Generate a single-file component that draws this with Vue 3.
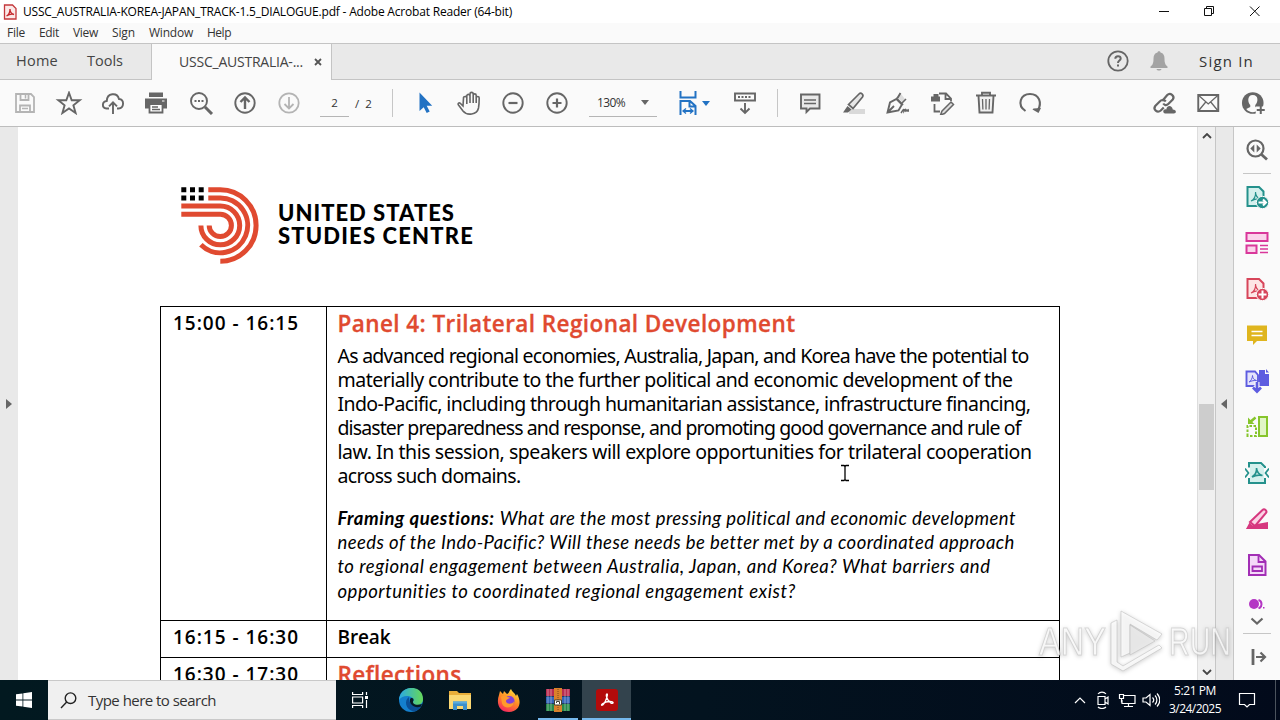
<template>
  <div class="screen">
    <header class="title-bar">
      <svg class="app-icon" viewBox="0 0 14 16">
        <path d="M1.500 1h8L13 4.500V15H1.500z" fill="#fbe9e8" stroke="#c4373b" stroke-width="1.300" />
        <path d="M3.500 12c2-1 3.500-4 3.500-7 0 3 2 5 4 5.500-2-.6-5-.1-7.500 1.500z" fill="none" stroke="#c4272b" stroke-width="1.300" />
      </svg>
      <span v-fit="489" class="title-text">USSC_AUSTRALIA-KOREA-JAPAN_TRACK-1.5_DIALOGUE.pdf - Adobe Acrobat Reader (64-bit)</span>
      <svg class="window-buttons" viewBox="0 0 137 22" fill="none" stroke="#111">
        <path d="M16 10.500h10M61.500 7.500h7v7h-7zM63.500 7V5.500h7v7H69M107 5.500l9.500 9.500M116.500 5.500L107 15" />
      </svg>
    </header>

    <nav class="menu-bar">
      <div v-for="item in menu" :key="item.label" class="menu-item">
        <span v-fit="item.width">{{ item.label }}</span>
      </div>
    </nav>

    <div class="tab-bar">
      <div class="tab-home"><span v-fit="42">Home</span></div>
      <div class="tab-tools"><span v-fit="36">Tools</span></div>
      <div class="tab-doc">
        <span v-fit="124">USSC_AUSTRALIA-...</span>
        <svg class="tab-close" viewBox="0 0 8 8"><path d="M1 1l6 6M7 1L1 7" stroke="#555" stroke-width="1.800" /></svg>
      </div>
      <div class="tab-right">
        <svg class="help" viewBox="0 0 24 24" fill="none" stroke="#666" stroke-width="1.800">
          <circle cx="12" cy="12" r="9.700" />
          <path d="M9.300 9.800c0-3.500 5.400-3.300 5.400-.2 0 2-2.700 2-2.700 4.400M12 15.500v2" stroke-width="2" />
        </svg>
        <svg class="bell" viewBox="0 0 18 22" fill="#a3a3a3">
          <path d="M7.500 2.500C7.500.8 10.500.8 10.500 2.500c3 .8 4 3 4 6 0 5 1 6.500 3 8v1.500H.5v-1.500c2-1.500 3-3 3-8 0-3 1-5.200 4-6zM6.500 19h5c-.5 2-4.500 2-5 0z" />
        </svg>
        <span v-fit="55" class="sign-in">Sign In</span>
      </div>
    </div>

    <div class="toolbar">
      <svg v-for="name in fileTools" :key="name" class="tool" viewBox="0 0 24 24" v-html="icons[name]"></svg>
      <div class="page-box">
        <span class="page-input">2</span>
        <span class="page-total">/&nbsp; 2</span>
      </div>
      <i class="divider"></i>
      <svg v-for="name in viewTools" :key="name" class="tool view-tool" viewBox="0 0 24 24" v-html="icons[name]"></svg>
      <div class="zoom-box"><span v-fit="28">130%</span><i class="caret"></i></div>
      <div class="fit-tool">
        <svg viewBox="0 0 18 26" fill="none" stroke="#2272c3" stroke-width="2">
          <path d="M1.500 1v6.500h15V1M1.500 25V11H11l5.500 5V25M10.500 11v5.500H16M4 21h10" />
          <path d="M7 18.500L4 21l3 2.500M11 18.500l3 2.500-3 2.500" stroke-width="1.300" />
        </svg>
        <i class="caret blue"></i>
      </div>
      <svg class="tool" viewBox="0 0 24 24" v-html="icons.scroll"></svg>
      <i class="divider second"></i>
      <svg v-for="name in editTools" :key="name" class="tool edit-tool" viewBox="0 0 24 24" v-html="icons[name]"></svg>
      <div class="toolbar-end">
        <svg v-for="name in shareTools" :key="name" class="tool" viewBox="0 0 24 24" v-html="icons[name]"></svg>
      </div>
    </div>

    <main class="workspace">
      <div class="left-pane"><i class="arrow-right"></i></div>

      <section class="page">
        <div class="logo">
          <svg viewBox="0 0 80 80" fill="none" stroke="#e04a30" stroke-width="5">
            <path d="M28.300 3.700h12a35.800 35.800 0 0 1 0 71.600" />
            <path d="M28.300 12h12a27.400 27.400 0 1 1-19.400 46.800" />
            <path d="M1.300 20h39a19.400 19.400 0 1 1-19.400 19.400" />
            <path d="M1.300 28.300h39a11.100 11.100 0 1 1-11.100 11.100" />
            <path d="M1.300 3.700h22.500M1.300 12h22.500" stroke="#000" stroke-dasharray="5 3.700" />
          </svg>
          <div class="logo-text">
            <div><span v-fit="177">UNITED STATES</span></div>
            <div><span v-fit="196">STUDIES CENTRE</span></div>
          </div>
        </div>

        <div class="agenda">
          <div class="time"><span v-fit="126">15:00 - 16:15</span></div>
          <div class="details panel">
            <h2><span v-fit="458">Panel 4: Trilateral Regional Development</span></h2>
            <div class="summary">
              <div v-for="line in summary" :key="line.text"><span v-fit="line.width">{{ line.text }}</span></div>
            </div>
            <div class="questions">
              <div v-for="line in questions" :key="line.text">
                <b v-if="line.lead" v-fit="157">{{ line.lead }}</b>
                <span v-fit="line.width">{{ line.text }}</span>
              </div>
            </div>
          </div>
          <div class="time"><span v-fit="126">16:15 - 16:30</span></div>
          <div class="details break"><span v-fit="53">Break</span></div>
          <div class="time"><span v-fit="126">16:30 - 17:30</span></div>
          <div class="details"><h2><span v-fit="124">Reflections</span></h2></div>
        </div>
      </section>

      <div class="scrollbar">
        <svg viewBox="0 0 10 6"><path d="M1 5l4-4 4 4" /></svg>
        <i class="thumb"></i>
        <svg viewBox="0 0 10 6"><path d="M1 1l4 4 4-4" /></svg>
      </div>
      <div class="collapse"><i class="arrow-left"></i></div>

      <aside class="side">
        <svg class="side-tool" viewBox="0 0 24 24" v-html="icons.searchTools"></svg>
        <i class="side-line"></i>
        <svg v-for="name in sideTools" :key="name" class="side-tool" viewBox="0 0 24 24" v-html="icons[name]"></svg>
        <svg class="side-cut" viewBox="0 0 20 10">
          <circle cx="7" cy="5" r="5" fill="#b436c4" />
          <path d="M11.500 1c4 1 4 7.500 0 8.500" fill="none" stroke="#b436c4" stroke-width="2" />
          <path d="M16 8h1.500v1.500H16z" fill="#b436c4" />
        </svg>
        <svg class="side-more" viewBox="0 0 14 8"><path d="M1.500 1.500L7 6.500l5.500-5" fill="none" stroke="#666" stroke-width="2.200" /></svg>
        <i class="side-line"></i>
        <svg class="side-tool" viewBox="0 0 24 24" v-html="icons.expand"></svg>
      </aside>

      <svg class="cursor" viewBox="0 0 10 18" fill="none">
        <path d="M1 1.500h3l1 1 1-1h3M5 2.500v13M1 16.500h3l1-1 1 1h3" stroke="#000" stroke-width="1.300" />
      </svg>
    </main>

    <svg class="watermark" viewBox="0 0 200 70">
      <g fill="#fff" fill-opacity="0.750" stroke="#bbb" stroke-opacity="0.550" stroke-width="1">
        <text x="2" y="49" textLength="67" lengthAdjust="spacingAndGlyphs">ANY</text>
        <text x="132" y="49" textLength="62" lengthAdjust="spacingAndGlyphs">RUN</text>
        <path d="M84 5l41 23-5 6-27-16v29l-9 4zM74 17l6-3v42l6 4 36-21 3 3-39 23-12-7z" />
        <path d="M93 19l25 16-25 14z" fill="#eee" />
      </g>
    </svg>

    <footer class="taskbar">
      <div class="start">
        <svg viewBox="0 0 16 16" fill="#fff"><path d="M0 2.300l6.500-.9v6.200H0zM7.300 1.200L16 0v7.600H7.300zM0 8.400h6.500v6.200L0 13.700zM7.300 8.400H16V16l-8.700-1.200z" /></svg>
      </div>
      <div class="search">
        <svg viewBox="0 0 17 17" fill="none" stroke="#222" stroke-width="1.400"><circle cx="10.500" cy="6.200" r="5.300" /><path d="M6.700 10L1 16" /></svg>
        <span v-fit="128">Type here to search</span>
      </div>
      <div class="task-view">
        <svg viewBox="0 0 17 16" fill="none" stroke="#fff" stroke-width="1.200"><path d="M.6 0v2.500h10V0M.6 5h10v6H.6zM.6 16v-2.500h10V16M14.500 0v3M14.500 8v8" /><path d="M13 4h3v3h-3z" fill="#fff" stroke="none" /></svg>
      </div>
      <div class="task">
        <svg viewBox="0 0 24 24">
          <defs>
            <linearGradient id="edge-top" x1="0" x2="1"><stop offset="0" stop-color="#2aa9e4" /><stop offset="1" stop-color="#67d957" /></linearGradient>
          </defs>
          <circle cx="12" cy="12" r="12" fill="#147fcd" />
          <path d="M0 12C1-4 24-4 24 11c0 4-3 6-6 6-4 0-5-2-3.500-4C16 8 4 5 0 12z" fill="url(#edge-top)" />
          <path d="M10 9c-5 3-4 13 5 14.500 4-.8 6-3 7.500-6-4 2.500-13 1-12.500-8.500z" fill="#0b4f96" />
          <path d="M14.500 12.500c-2 3 2 5.500 8.500 3.500l-1 2.500c-6 2.500-12-2-11-7 .5-2 4-2 3.500 1z" fill="#071a25" />
        </svg>
      </div>
      <div class="task">
        <svg viewBox="0 0 24 24">
          <path d="M1 3h8l2 2h12v16H1z" fill="#e9ae3a" />
          <path d="M1 7h22v14H1z" fill="#fbd873" />
          <path d="M5 13.500h14V22h-4v-4H9v4H5z" fill="#3d8fca" />
          <path d="M5 13.500h14v2H5z" fill="#5cacdf" />
        </svg>
      </div>
      <div class="task">
        <svg viewBox="0 0 24 24">
          <defs>
            <linearGradient id="fox" x1="0.800" y1="0" x2="0.300" y2="1"><stop offset="0" stop-color="#ffe23d" /><stop offset="0.500" stop-color="#ff8a25" /><stop offset="1" stop-color="#f5265f" /></linearGradient>
          </defs>
          <path d="M2 7l1-4 3 3 1-3 3 3c2 0 2-3 4-5 1 3 4 4 5 7l1-2c5 8 3 17-8 18C2 24-1 15 2 7z" fill="url(#fox)" />
          <circle cx="12.500" cy="13" r="5" fill="#8140d8" />
          <path d="M4 9c3-2 5-1 6 0l3 .5c-1 2-4 1-4 4 1 3 6 3 8 0 0 7-10 8-12 2z" fill="#ff9a2c" />
        </svg>
      </div>
      <div class="task running">
        <svg viewBox="0 0 24 24">
          <path d="M0 1h24v7H0z" fill="#b82d50" /><path d="M0 8.500h24v7H0z" fill="#3465b8" /><path d="M0 16h24v7H0z" fill="#27894a" />
          <path d="M2 1v22M5 1v22M19 1v22M22 1v22" stroke="#fff" stroke-opacity="0.400" />
          <path d="M8 0h8v24H8z" fill="#d9812b" /><path d="M12 1v22" stroke="#7c481c" stroke-dasharray="1 1" />
          <path d="M8.500 12h7v5h-7z" fill="#fff" stroke="#443" /><path d="M10.500 15v-1.500h3V16" fill="none" stroke="#443" />
        </svg>
      </div>
      <div class="task active">
        <svg viewBox="0 0 24 24">
          <rect x="1" y="1" width="22" height="22" rx="3" fill="#b30b0b" />
          <path d="M12 6c-1.800 0 0 6.500 3.600 8.800 2.700 1.400 3.600-.9.900-1.200-3.600-.4-7.200.9-9 2.100-2.300 1.800 0 2.700 1.800-.5 1.800-3.200 4-9.200 2.700-9.200z" fill="none" stroke="#fff" stroke-width="1.300" />
        </svg>
      </div>
      <div class="tray">
        <svg class="tray-up" viewBox="0 0 12 8"><path d="M1 7l5-5 5 5" /></svg>
        <svg class="tray-icon" viewBox="0 0 18 18"><path d="M4 5.500h7v8H4zM11 8l3-2v7l-3-2M4 3c2-2.500 6-2.500 8 0M4 16c2 2 6 2 8 0" /></svg>
        <svg class="tray-icon" viewBox="0 0 18 18"><path d="M6 4.500h11v8H4V9M10.500 12.500v3M6 15.500h9M1.500 3.500h4v4h-4zM3.500 7.500v4" /></svg>
        <svg class="tray-icon" viewBox="0 0 18 18"><path d="M1 7h3l4-3.500v11L4 11H1zM10.500 6.500c1.500 1.500 1.500 3.500 0 5M13 4.500c2.500 2.500 2.500 6.500 0 9M15 2.500c3.500 4 3.500 9 0 13" /></svg>
      </div>
      <div class="clock">
        <div><span v-fit="42">5:21 PM</span></div>
        <div><span v-fit="52">3/24/2025</span></div>
      </div>
      <svg class="notify" viewBox="0 0 18 18"><path d="M1.500 2.500h15v11h-5L9 16l-2.500-2.500h-5z" /></svg>
      <i class="show-desktop"></i>
    </footer>
  </div>
</template>

<script setup>
// Spreads the letters of a line so that it fills the given width
const vFit = {
  mounted(el, { value }) {
    const natural = el.getBoundingClientRect().width;
    const count = el.textContent.length;
    el.style.letterSpacing = `${(value - natural) / count}px`;
  },
};

const menu = [
  { label: "File", width: 18 },
  { label: "Edit", width: 20 },
  { label: "View", width: 25 },
  { label: "Sign", width: 23 },
  { label: "Window", width: 44 },
  { label: "Help", width: 24 },
];

const summary = [
  { text: "As advanced regional economies, Australia, Japan, and Korea have the potential to", width: 691 },
  { text: "materially contribute to the further political and economic development of the", width: 675 },
  { text: "Indo-Pacific, including through humanitarian assistance, infrastructure financing,", width: 693 },
  { text: "disaster preparedness and response, and promoting good governance and rule of", width: 683 },
  { text: "law. In this session, speakers will explore opportunities for trilateral cooperation", width: 694 },
  { text: "across such domains.", width: 183 },
];

const questions = [
  { lead: "Framing questions:", text: "What are the most pressing political and economic development", width: 516 },
  { text: "needs of the Indo-Pacific? Will these needs be better met by a coordinated approach", width: 676 },
  { text: "to regional engagement between Australia, Japan, and Korea? What barriers and", width: 653 },
  { text: "opportunities to coordinated regional engagement exist?", width: 458 },
];

const fileTools = ["save", "star", "cloud", "print", "find", "up", "down"];
const viewTools = ["pointer", "hand", "minus", "plus"];
const editTools = ["comment", "highlight", "sign", "stamp", "trash", "rotate"];
const shareTools = ["link", "mail", "person"];
const sideTools = ["exportPdf", "organize", "createPdf", "note", "combine", "compare", "compress", "redact", "form"];

const grey = 'fill="none" stroke="#666" stroke-width="1.9"';
const pdfMark = "M6 16c3-1 5-5 4.500-9 0 4 2 6 5 7-3-.6-6 0-9.500 2z";

const icons = {
  save: '<g fill="none" stroke="#b4b4b4" stroke-width="1.8"><path d="M3 3h15l3 3v15H3z"/><path d="M7.500 3v6h8V3M7 21v-6.500h10V21"/><path d="M12.500 4v3.500M9 17.500h6" stroke-width="1.500"/></g>',
  star: `<path ${grey} d="M12 1.800l2.700 7.500h8l-6.300 5 2.200 7.700-6.600-4.500L5.400 22l2.200-7.700-6.300-5h8z"/>`,
  cloud: `<path ${grey} d="M8 17.500H5.500C.5 17 .8 10.500 5.800 10 6 2 16 .8 18 8c5.500.5 5.500 9-.5 9.500H16M12 23V11.500M8 15.300l4-4 4 4"/>`,
  print: '<path fill="#666" d="M4 1.500h14V6H4zM0 7.500h22v10h-4V14H4v3.500H0z"/><path fill="#fff" stroke="#666" stroke-width="1.800" d="M4.500 13h13v8.500h-13z"/><path stroke="#666" stroke-width="1.300" d="M7 16h6M7 18.500h8"/><path stroke="#fff" d="M17 10h2.500"/>',
  find: `<circle ${grey} cx="10" cy="10" r="8"/><path d="M16 16l7 7" stroke="#666" stroke-width="3"/><path d="M5.500 10h2M9 10h2M12.500 10h2" stroke="#666" stroke-width="2"/>`,
  up: `<circle ${grey} cx="12" cy="12" r="9.700"/><path fill="none" stroke="#666" stroke-width="2.400" d="M12 18V6.500M7.500 11L12 6.500l4.500 4.500"/>`,
  down: '<g fill="none" stroke="#b4b4b4" stroke-width="1.800"><circle cx="12" cy="12" r="9.700"/><path d="M12 6v11.500M7.500 13l4.500 4.500 4.500-4.500"/></g>',
  pointer: '<path fill="#2272c3" d="M6.500 1.500V20l4.200-3.700 3 5.700 3-1.500-3-5.700h5.500z"/>',
  hand: '<path fill="none" stroke="#666" stroke-width="1.600" d="M6 15L3.500 12.500c-1.500-1.500-3 0-2 1.500L6 20c4 5 14 4 15.500-3 .7-4 .7-7 .7-10 0-2-3-2-3 0v5V4.500c0-2.200-3-2.200-3 0V12 3c0-2.200-3.200-2.200-3.200 0v9V5c0-2.200-3.200-2.200-3.200 0v8V7c0-2.200-3.500-2-3.300 0z"/>',
  minus: `<circle ${grey} cx="12" cy="12" r="9.700"/><path d="M7.500 12h9" stroke="#666" stroke-width="2.200"/>`,
  plus: `<circle ${grey} cx="12" cy="12" r="9.700"/><path d="M7.500 12h9M12 7.500v9" stroke="#666" stroke-width="2.200"/>`,
  scroll: `<path ${grey} d="M2 2.500h20v7H2z"/><path d="M5 6h14" stroke="#666" stroke-width="2" stroke-dasharray="2 1.500"/><path ${grey} d="M12 12v10M7.500 17.500L12 22l4.500-4.500"/>`,
  comment: '<path d="M3 3.500h18.500v14H12L8.500 21v-3.500H3z" fill="#e9e9e9" stroke="#666" stroke-width="1.900"/><path d="M6 9h12M6 12.500h12" stroke="#666" stroke-width="1.300"/>',
  highlight: '<path d="M7 18h16v5H7z" fill="#d9d9d9"/><path d="M6.500 13.500L17 3c2-2 5 .5 3.500 3L11 17.500z" fill="#e6e6e6" stroke="#666" stroke-width="1.700"/><path d="M5.500 15l4 3.500L6 21.500H1z" fill="#666"/>',
  sign: `<path d="M11 6l4-3 4 5-3 3z" fill="#ddd"/><path ${grey} d="M1.500 21.500l2.500-10L10.500 8l5.500 5.500-3.500 6zM1.500 21.500L8 15M10 7l7 7M11.500 7l3-5"/><path fill="none" stroke="#666" stroke-width="1.600" d="M16 12l4-4M15 22c2-3 3-5 3-2 2-3 2-1 2 0l2-1v1h1"/>`,
  stamp: '<path d="M1 5.500h9v5H1zM3.500 3h5v3h-5z" fill="#666"/><path d="M9 2.500h7l5 5V10M15.500 3v5H21M4.500 13v7.500H10" fill="none" stroke="#666" stroke-width="1.800"/><path d="M12 20l9-9 2.500 2.500-9 9-4 1.500z" fill="#ddd" stroke="#666" stroke-width="1.500"/>',
  trash: `<path d="M5 5h14l-1 16.500H6z" fill="#f0f0f0"/><path ${grey} d="M2 4.500h20M8 4V1.800h8V4M4.500 5l1 16.500h13L19.500 5"/><path d="M8.500 8l.4 10.500M12 8v10.500M15.500 8l-.4 10.500" stroke="#666" stroke-width="1.300"/>`,
  rotate: '<path fill="none" stroke="#666" stroke-width="2.100" d="M7.500 20C-1.500 14 2.500 3 12 3c9.500 0 12 9 8 16"/><path d="M14.500 18.500l1-1 7.500-.5-2.500 5z" fill="#666"/>',
  link: '<g fill="none" stroke="#666" stroke-width="2.200"><path d="M10 10l5-6c3-3 8 1 5.500 4.500L16 13c-2 2-4 1-5-.5"/><path d="M13.500 10.500c-2-2.500-4.500-1.500-6 0L3 15c-2.500 3.500 2 7.500 5.500 4.500l3-3"/></g><path d="M13 22.500c-3 0-2.500-5 1-4 1-5 6-4 6.500 0 4 0 4 4 1 4z" fill="#666"/>',
  mail: `<path ${grey} d="M2 4h20v16H2z"/><path d="M2.500 4.500L12 13l9.500-8.500M2.500 19.500l7-8.500M21.500 19.500l-7-8.500" fill="none" stroke="#666" stroke-width="1.300"/>`,
  person: '<circle cx="11.500" cy="12" r="10.800" fill="#666"/><path d="M11.500 4c-6 0-5 8-2.500 10v2l-4 2c3 4 9 4 12 1v-2l-3-1v-2c3-3 3.500-10-2.500-10z" fill="#fafafa"/><path d="M14.500 15.500h9V24h-9z" fill="#fafafa"/><path d="M19.500 15v8M15.500 19h8" stroke="#666" stroke-width="2"/>',
  searchTools: '<circle cx="10.500" cy="10.500" r="8" fill="none" stroke="#666" stroke-width="2.200"/><path d="M16.500 16.500l5.500 5" stroke="#666" stroke-width="2.800"/><path d="M9.300 6.500v8l-4-4zM11.700 6.500v8l4-4z" fill="#666"/>',
  exportPdf: `<path d="M2.500 2H14l4.500 4.500V21h-16z" fill="#d4f0ed" stroke="#24918c" stroke-width="2"/><path d="${pdfMark}" fill="none" stroke="#24918c" stroke-width="1.200"/><circle cx="17.500" cy="17.500" r="6.200" fill="#24918c" stroke="#fafafa"/><path d="M13.500 17.500h7M18 14.500l3 3-3 3" fill="none" stroke="#fff" stroke-width="2"/>`,
  organize: '<g fill="#fbd3eb" stroke="#d9379a" stroke-width="2"><path d="M1.500 2h21v8h-21zM1.500 14.500h10V22h-10z"/></g><path d="M15 14.500h8M15 18h8M15 21.500h8" stroke="#d9379a" stroke-width="1.300"/>',
  createPdf: `<path d="M2.500 2H14l4.500 4.500V21h-16z" fill="#fde5e5" stroke="#d7455a" stroke-width="2"/><path d="${pdfMark}" fill="none" stroke="#d7455a" stroke-width="1.200"/><circle cx="17.500" cy="17.500" r="6.200" fill="#d7455a" stroke="#fafafa"/><path d="M13.500 17.500h8M17.500 13.500v8" stroke="#fff" stroke-width="2"/>`,
  note: '<path d="M2 2.500h20V18H12l-4 4v-4H2z" fill="#dfb51e"/><path d="M6.500 8.500h11M6.500 12.500h11" stroke="#fff" stroke-width="1.700"/>',
  combine: '<path d="M14 1h6v4h4v12H14z" fill="#5d5ce0"/><path d="M21 0l3 3.500h-3z" fill="#5d5ce0"/><path d="M1.500 2.500H10l3 3.500V17H1.500z" fill="#e4e3fb" stroke="#5d5ce0" stroke-width="1.900"/><path d="M4 13c2-1 3.500-4 3.500-6.500 0 2.500 1.500 4.500 4 5-2-.3-5 .3-7.500 1.500z" fill="none" stroke="#5d5ce0"/><path d="M12 13v10M7.500 18.500L12 23l4.500-4.500" fill="none" stroke="#fafafa" stroke-width="5"/><path d="M12 13v9M8 18.500l4 4 4-4" fill="none" stroke="#5d5ce0" stroke-width="2.700"/>',
  compare: '<path d="M14 2h8v19h-8z" fill="#e1f5c7" stroke="#86c52c" stroke-width="2"/><path d="M2.500 21V11H11v10z" fill="none" stroke="#86c52c" stroke-width="2" stroke-dasharray="2.500 1.500"/><path d="M3 2.500V9h6.500L7.300 7l4-3.500-1.500-2L5.500 5z" fill="#86c52c"/>',
  compress: '<path d="M5 3H15l4 4v14H5z" fill="#d4f0ed"/><path d="M4 6.500V2h12l4 4v1M4 17v5h16v-5" fill="none" stroke="#24918c" stroke-width="2"/><path d="M0 7.500l3.500 4.500L0 16.500M24 7.500L20.500 12l3.500 4.500M7 16c3-2 5-5 4.500-9 0 4 3 7 6 7.500-3-.8-7-.5-10.500 1.500z" fill="none" stroke="#24918c" stroke-width="1.700"/>',
  redact: '<path d="M12 17l11-2v7H1l2-2z" fill="#d6387f"/><path d="M5 15L17.500 3c2-2 5 1 3.500 3L10 19z" fill="#fbd3e5" stroke="#d6387f" stroke-width="2"/><path d="M4.500 15.500l5 5L1 22z" fill="#d6387f"/>',
  form: '<path d="M4 2h10l6.500 6.500V22H4z" fill="#f4d9f8" stroke="#a22eb5" stroke-width="2"/><path d="M13.500 2v7H20M7.500 13.500H17v4.500H7.500z" fill="none" stroke="#a22eb5" stroke-width="1.800"/>',
  expand: '<path d="M8 4v16" stroke="#666" stroke-width="2.800"/><path d="M11 12h9M15.500 7.500L20 12l-4.500 4.500" fill="none" stroke="#666" stroke-width="2.200"/>',
};
</script>

<style>
body {
  overflow: hidden;
}
</style>

<style scoped>
.screen {
  position: relative;
  display: flex;
  flex-direction: column;
  width: 1280px;
  height: 720px;
  overflow: hidden;
  box-sizing: border-box;
  font-family: "Open Sans", "Noto Sans", sans-serif;
  color: #333;
  background: #fff;
  white-space: nowrap;
}

.screen * {
  box-sizing: border-box;
}

span,
b {
  display: inline-block;
}

svg,
i {
  display: block;
  flex: none;
}

/* Window chrome */
.title-bar {
  display: flex;
  align-items: center;
  height: 23px;
  padding-left: 3px;
}

.app-icon {
  width: 14px;
  height: 16px;
}

.title-text {
  margin-left: 6px;
  font-size: 12px;
  color: #000;
}

.window-buttons {
  width: 137px;
  height: 22px;
  margin-left: auto;
}

.menu-bar {
  display: flex;
  align-items: center;
  gap: 14px;
  height: 20px;
  padding: 0 0 2px 7px;
  background: #fafafa;
  font-size: 12px;
}

.tab-bar {
  display: flex;
  height: 37px;
  background: #e9e9e9;
  border-top: 1px solid #c4c4c4;
  border-bottom: 1px solid #c4c4c4;
  line-height: 34px;
}

.tab-home,
.tab-tools {
  padding-left: 16px;
  width: 87px;
  font-size: 14.5px;
  color: #444;
}

.tab-tools {
  padding-left: 0;
  width: 64px;
}

.tab-doc {
  display: flex;
  align-items: center;
  width: 181px;
  height: 36px;
  padding: 0 0 1px 27px;
  background: #fafafa;
  border-left: 1px solid #c4c4c4;
  border-right: 1px solid #c4c4c4;
  font-size: 14px;
  color: #444;
}

.tab-close {
  width: 8px;
  height: 8px;
  margin-left: 11px;
}

.tab-right {
  display: flex;
  align-items: center;
  margin-left: auto;
  padding: 0 26px 1px 0;
}

.help {
  width: 24px;
  height: 24px;
}

.bell {
  width: 18px;
  height: 22px;
  margin: 0 31px 0 20px;
}

.sign-in {
  font-size: 15px;
}

.toolbar {
  display: flex;
  align-items: center;
  height: 47px;
  padding: 0 5px 0 3px;
  background: #fafafa;
  border-bottom: 1px solid #bdbdbd;
}

.tool {
  width: 44px;
  height: 24px;
}

.page-box {
  display: flex;
  align-items: center;
  width: 81px;
  padding-left: 9px;
  font-size: 11.5px;
}

.page-input {
  width: 29px;
  height: 27px;
  line-height: 26px;
  border-bottom: 1px solid #b5b5b5;
  text-align: center;
}

.page-total {
  margin-left: 6px;
}

.divider {
  width: 1px;
  height: 28px;
  margin-right: 10px;
  background: #c6c6c6;
}

.zoom-box {
  display: flex;
  align-items: center;
  justify-content: space-between;
  width: 68px;
  height: 27px;
  margin-left: 10px;
  padding: 0 8px;
  border-bottom: 1px solid #b5b5b5;
  font-size: 12px;
}

.caret {
  border: 4px solid transparent;
  border-top: 5px solid #666;
  border-bottom: 0;
}

.caret.blue {
  border-top-color: #2272c3;
}

.fit-tool {
  display: flex;
  align-items: center;
  gap: 5px;
  width: 66px;
  padding-left: 22px;
}

.fit-tool svg {
  width: 18px;
  height: 26px;
}

.second {
  margin-left: 10px;
}

.toolbar-end {
  display: flex;
  margin-left: auto;
}

.toolbar-end .tool {
  width: 44.5px;
}

/* Document area */
.workspace {
  position: relative;
  display: flex;
  height: 553px;
}

.left-pane {
  display: flex;
  align-items: center;
  width: 18px;
  padding-left: 6px;
  background: #e9e9e9;
}

.arrow-right,
.arrow-left {
  border: 5px solid transparent;
  border-left: 6px solid #666;
  border-right: 0;
}

.arrow-left {
  border-left: 0;
  border-right: 6px solid #666;
}

.page {
  width: 1179px;
  height: 553px;
  padding: 59px 0 0 142px;
  overflow: hidden;
  color: #000;
}

.logo {
  display: flex;
  height: 120px;
  padding-left: 20px;
}

.logo svg {
  width: 80px;
  height: 80px;
}

.logo-text {
  margin: 15px 0 0 18px;
  font-family: Lato, sans-serif;
  font-size: 22px;
  font-weight: 900;
  line-height: 23px;
}

.agenda {
  display: grid;
  grid-template-columns: 166px 733px;
  grid-template-rows: 314px 37px 60px;
  width: 900px;
  border-top: 1px solid #000;
  border-left: 1px solid #000;
}

.time,
.details {
  padding: 3px 0 0 10.5px;
  border-right: 1px solid #000;
  border-bottom: 1px solid #000;
  line-height: 27px;
  font-size: 19px;
  font-weight: 600;
}

.time {
  padding-left: 12px;
}

h2 {
  margin: 0;
  font-size: 22.5px;
  font-weight: 600;
  line-height: 27px;
  color: #e04a30;
  -webkit-text-stroke: 0.3px #e04a30;
}

.summary {
  margin-top: 7px;
  font-family: "Noto Sans", sans-serif;
  font-size: 19.5px;
  font-weight: 400;
  line-height: 24px;
}

.questions {
  margin-top: 18px;
  font-family: Lato, sans-serif;
  font-size: 18.5px;
  font-style: italic;
  font-weight: 400;
  line-height: 24.2px;
}

.questions b {
  margin-right: 5px;
}

.scrollbar {
  display: flex;
  flex-direction: column;
  align-items: center;
  width: 19px;
  padding: 6px 0 5px;
  background: #f0f0f0;
  border-left: 1px solid #ddd;
  border-right: 1px solid #c6c6c6;
}

.scrollbar svg {
  width: 10px;
  height: 6px;
  fill: none;
  stroke: #444;
  stroke-width: 1.8;
}

.thumb {
  width: 15px;
  height: 86px;
  margin: 265px 0 auto;
  background: #cdcdcd;
}

.collapse {
  display: flex;
  align-items: center;
  width: 18px;
  padding-left: 5px;
  background: #e9e9e9;
  border-right: 1px solid #c6c6c6;
}

.side {
  display: flex;
  flex-direction: column;
  align-items: center;
  width: 46px;
  background: #fafafa;
}

.side-tool {
  width: 24px;
  height: 46px;
}

.side-line {
  width: 28px;
  height: 1px;
  background: #c6c6c6;
}

.side-cut {
  width: 20px;
  height: 10px;
  margin-top: 11px;
}

.side-more {
  width: 14px;
  height: 8px;
  margin: 8px 0;
}

.cursor {
  position: absolute;
  left: 840px;
  top: 337px;
  width: 10px;
  height: 18px;
}

.watermark {
  position: absolute;
  left: 1037px;
  top: 606px;
  width: 200px;
  height: 70px;
  font-family: "Liberation Sans", sans-serif;
  font-size: 38px;
  filter: drop-shadow(0 1px 2px rgba(0, 0, 0, 0.25));
}

/* Taskbar */
.taskbar {
  display: flex;
  height: 40px;
  background: linear-gradient(90deg, #021920, #03131f 55%, #020a1b);
  color: #fff;
}

.taskbar > div {
  display: flex;
  align-items: center;
  justify-content: center;
  flex: none;
}

.start {
  width: 48px;
}

.start svg {
  width: 16px;
  height: 16px;
}

.taskbar > .search {
  justify-content: flex-start;
  gap: 11px;
  width: 288px;
  padding-left: 12px;
  background: #f0f0f0;
  border-top: 1px solid #c9c9c9;
  border-bottom: 1px solid #c9c9c9;
  font-size: 15px;
  color: #333;
}

.search svg {
  width: 17px;
  height: 17px;
}

.task-view {
  width: 50px;
  padding-right: 1px;
}

.task-view svg {
  width: 17px;
  height: 16px;
}

.task {
  width: 49px;
  height: 40px;
}

.task svg {
  width: 24px;
  height: 24px;
}

.taskbar > .running {
  background: linear-gradient(#76b9ed, #76b9ed) 5px 38px / 40px 2px no-repeat;
}

.taskbar > .active {
  background: #33434d;
  box-shadow: inset 0 -2px #76b9ed;
}

.tray {
  gap: 6px;
  margin-left: auto;
}

.tray svg,
.notify {
  fill: none;
  stroke: #fff;
  stroke-width: 1.2;
}

.tray-up {
  width: 12px;
  height: 8px;
  margin-right: 2px;
}

.tray-icon {
  width: 18px;
  height: 18px;
}

.taskbar > .clock {
  flex-direction: column;
  width: 70px;
  font-size: 12px;
  line-height: 18px;
}

.notify {
  width: 18px;
  height: 18px;
  margin: 11px 19px 0 8px;
}

.show-desktop {
  width: 5px;
  height: 40px;
  border-left: 1px solid #4b535d;
}
</style>
